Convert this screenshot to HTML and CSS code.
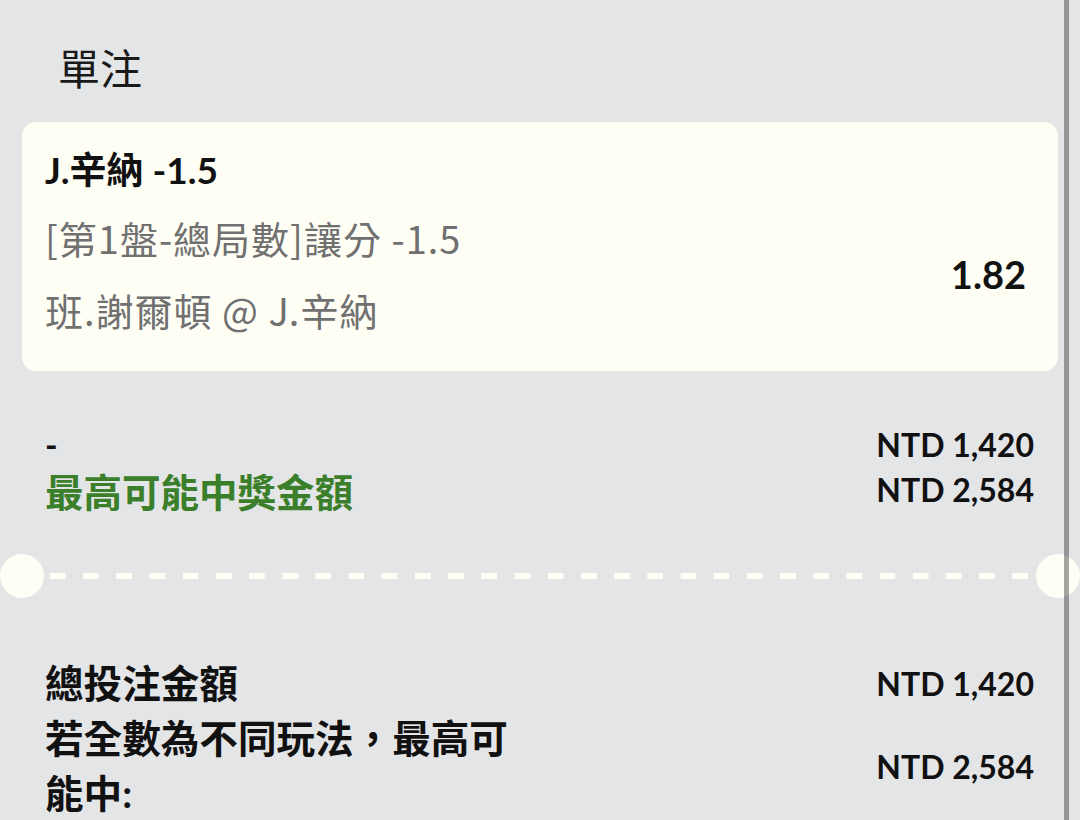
FILE: index.html
```html
<!DOCTYPE html>
<html lang="zh-Hant">
<head>
  <meta charset="UTF-8" />
  <meta name="viewport" content="width=device-width, initial-scale=1.0"/>
  <title>單注</title>
  <link rel="stylesheet" href="styles.css">
</head>
<body>

  <div class="betslip">
    <h2 class="title">單注</h2>

    <div class="bet-card">
      <div class="selection">J.辛納 -1.5</div>
      <div class="bet-row">
        <div class="bet-info">
          <div class="market">[第1盤-總局數]讓分 -1.5</div>
          <div class="match">班.謝爾頓 @ J.辛納</div>
        </div>
        <div class="odds">1.82</div>
      </div>
    </div>

    <div class="summary">
      <div class="line">
        <span class="label">-</span>
        <span class="amount">NTD 1,420</span>
      </div>
      <div class="line">
        <span class="label green">最高可能中獎金額</span>
        <span class="amount">NTD 2,584</span>
      </div>
    </div>

    <!-- ticket cut line -->
    <div class="divider">
      <span class="notch"></span>
      <span class="dashes"></span>
      <span class="notch"></span>
    </div>

    <div class="totals">
      <div class="total-row">
        <span class="total-label">總投注金額</span>
        <span class="amount">NTD 1,420</span>
      </div>
      <div class="total-row">
        <span class="total-label">若全數為不同玩法，最高可能中:</span>
        <span class="amount">NTD 2,584</span>
      </div>
    </div>
  </div>

  <div class="scroll-thumb"></div>

</body>
</html>
```

FILE: styles.css
```css
body {
  margin: 0;
  font-family: Lato, "Noto Sans CJK TC", sans-serif;
  background-color: #e4e5e7;
  color: #111;
  height: 820px;
  overflow: hidden;
  position: relative;
}
.betslip {
  display: flex;
  flex-direction: column;
}
.title {
  margin: 37px 0 0 58px;
  height: 60px;
  line-height: 60px;
  font-family: "Noto Sans CJK TC", sans-serif;
  font-size: 42px;
  font-weight: 400;
  color: #1a1a1a;
}

/* Bet card */
.bet-card {
  margin: 25px 22px 0 22px;
  background-color: #fffef5;
  border-radius: 14px;
  padding: 24px 32px 25px 23px;
}
.selection {
  font-size: 37px;
  font-weight: 700;
  line-height: 48px;
  height: 48px;
}
.bet-row {
  display: flex;
  justify-content: space-between;
  align-items: center;
  margin-top: 8px;
}
.market,
.match {
  font-family: "Noto Sans CJK TC", sans-serif;
  font-size: 38px;
  letter-spacing: 1px;
  line-height: 72px;
  height: 72px;
  color: #707070;
}
.odds {
  font-size: 38px;
  font-weight: 700;
}

/* Summary */
.summary {
  margin: 51px 46px 0 45px;
}
.line {
  display: flex;
  justify-content: space-between;
  align-items: center;
  height: 45px;
}
.label {
  font-size: 34px;
  font-weight: 700;
}
.label.green {
  font-size: 38.5px;
  color: #3b7f2b;
}
.amount {
  font-size: 32px;
  font-weight: 700;
}

/* Divider */
.divider {
  display: flex;
  align-items: center;
  height: 44px;
  margin-top: 42px;
}
.notch {
  width: 44px;
  height: 44px;
  border-radius: 50%;
  background-color: #fffef5;
  flex-shrink: 0;
}
.dashes {
  flex: 1;
  height: 6px;
  margin: 0 6px;
  background-image: linear-gradient(to right, #fffef5 0 16px, transparent 16px);
  background-size: 33.2px 6px;
  background-repeat: repeat-x;
}

/* Totals */
.totals {
  margin: 58px 46px 0 45px;
}
.total-row {
  display: flex;
  justify-content: space-between;
  align-items: center;
}
.total-label {
  max-width: 480px;
  font-size: 38.6px;
  font-weight: 700;
  line-height: 55px;
}

.scroll-thumb {
  position: absolute;
  top: 0;
  bottom: 0;
  left: 1064px;
  width: 5px;
  background-color: rgba(0, 0, 0, 0.35);
}
```
